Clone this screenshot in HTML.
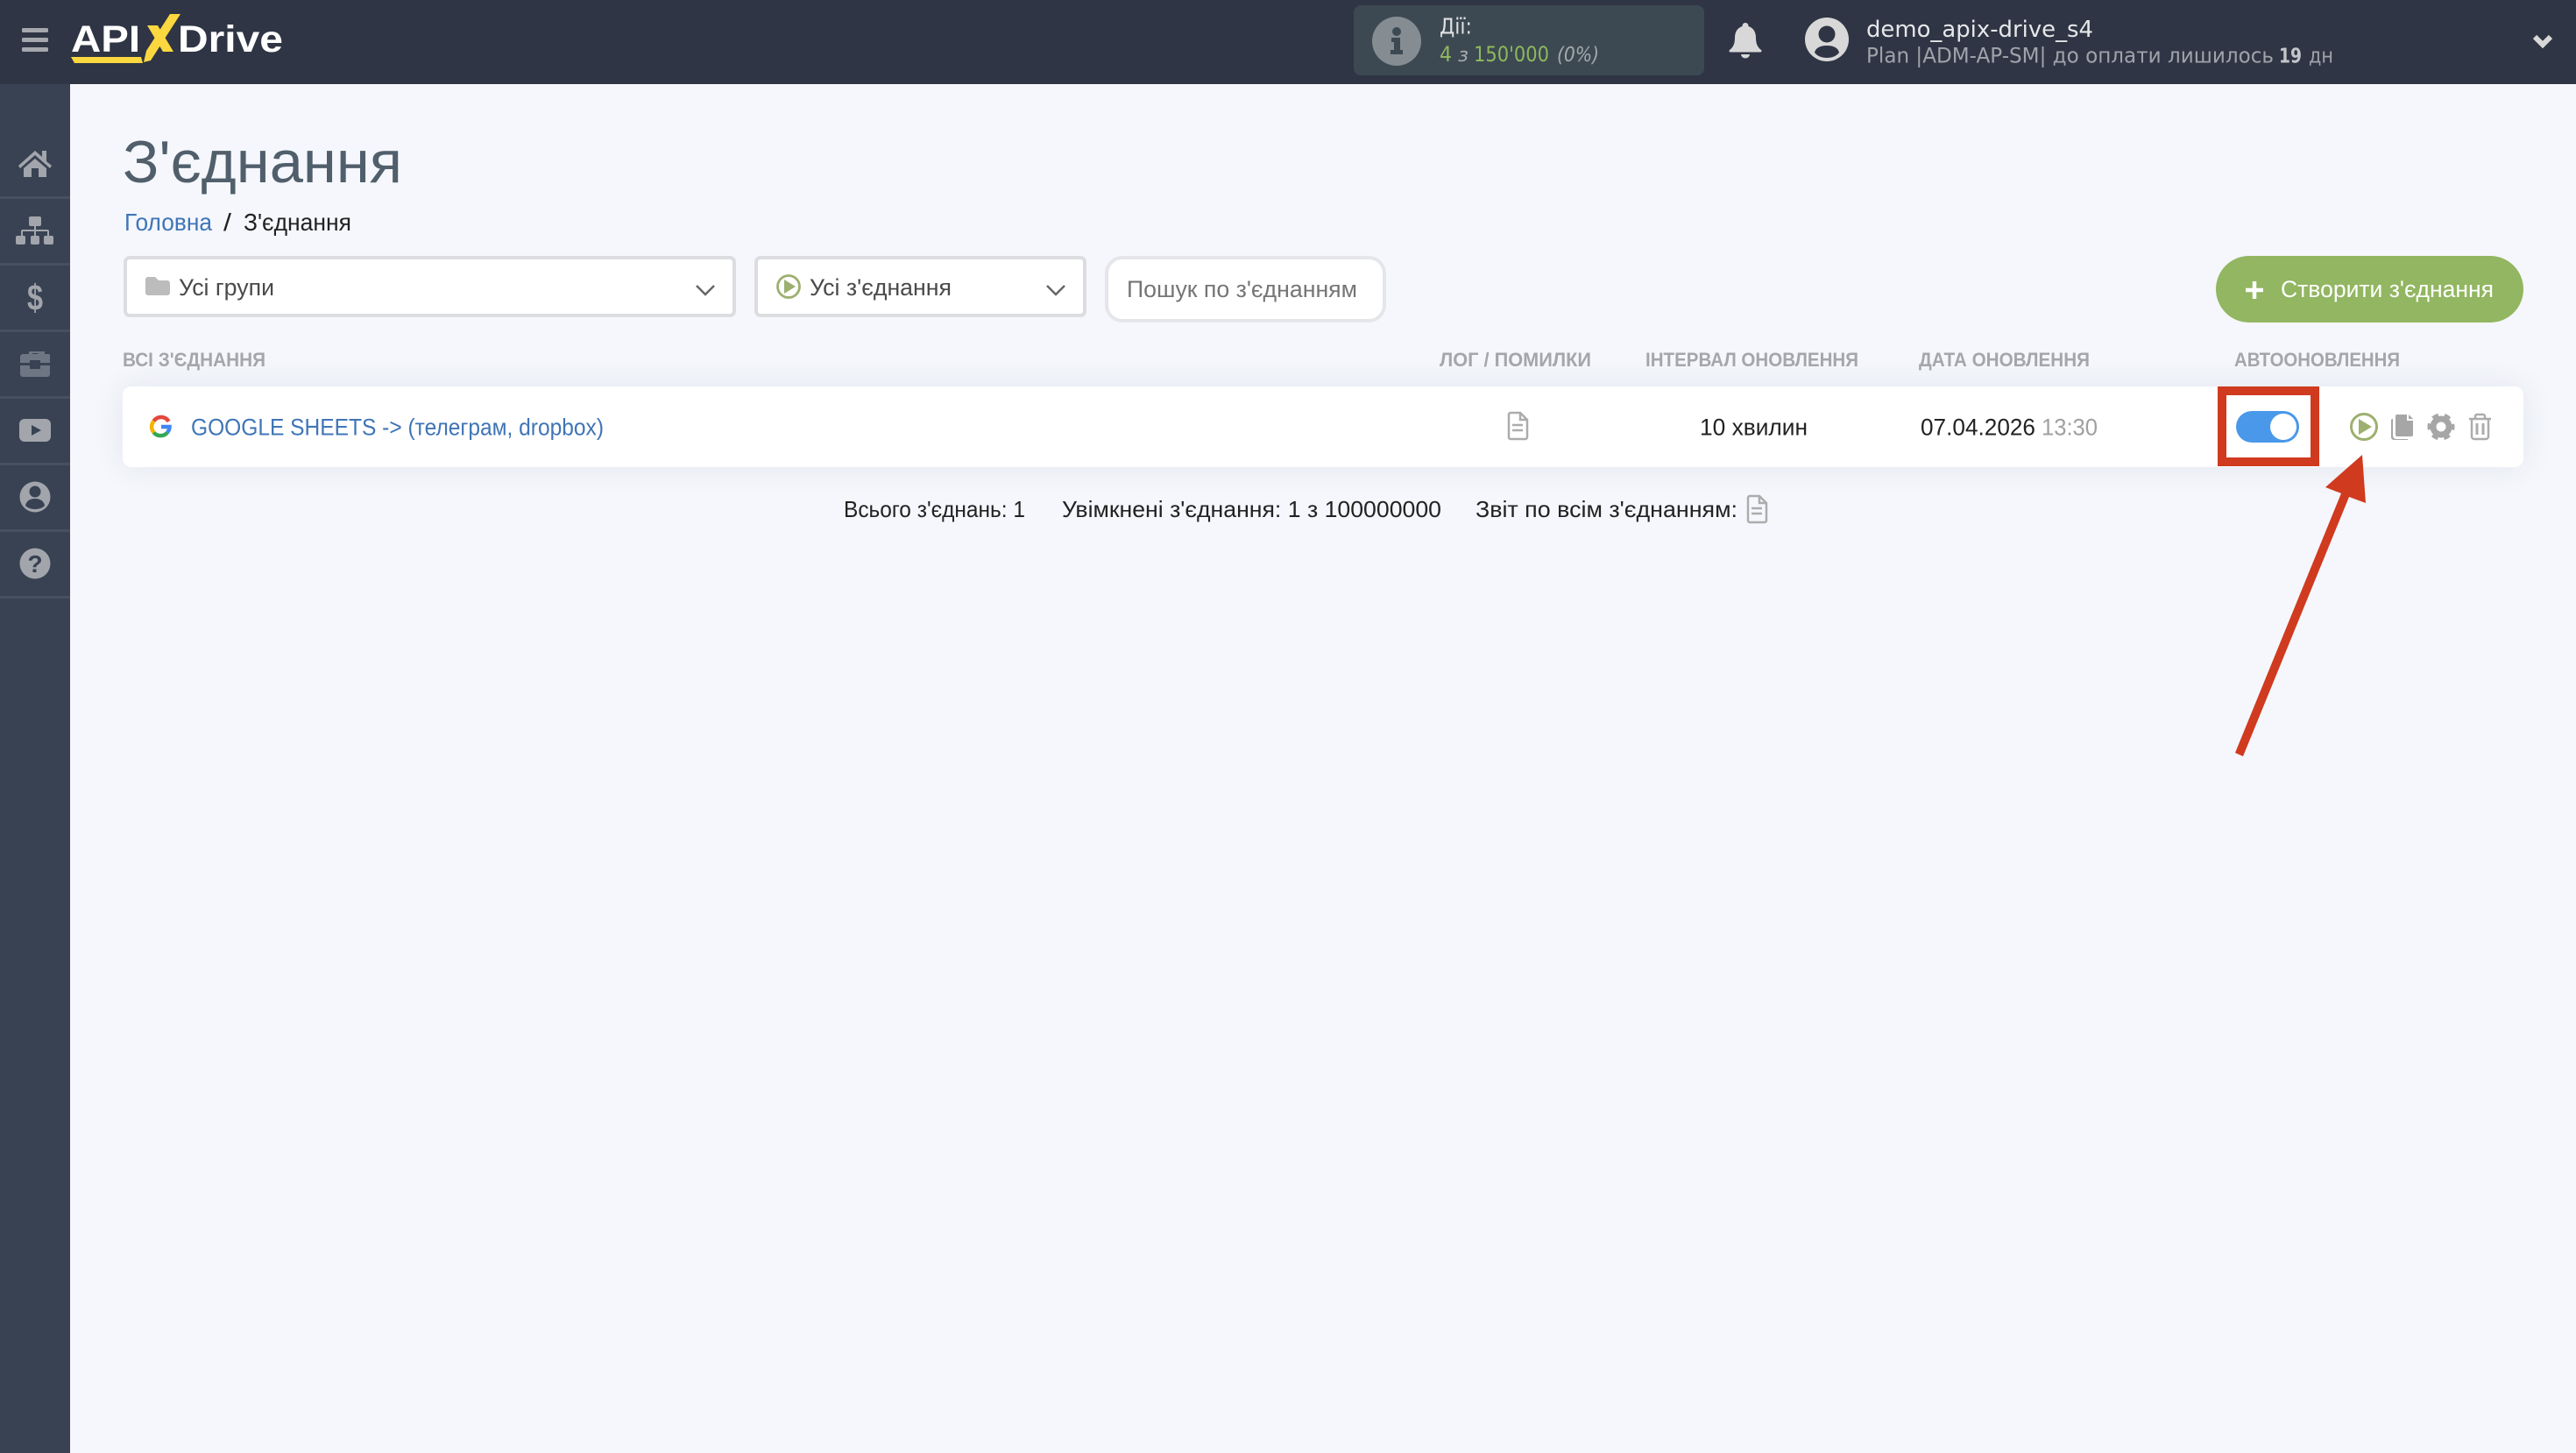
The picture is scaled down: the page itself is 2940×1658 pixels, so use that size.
<!DOCTYPE html>
<html lang="uk">
<head>
<meta charset="utf-8">
<title>З'єднання</title>
<style>
html,body{margin:0;padding:0;width:2940px;height:1658px;overflow:hidden;background:#f5f7fc}
div{position:absolute;box-sizing:border-box}
svg{position:absolute;left:0;top:0}
text{font-family:"Liberation Sans","DejaVu Sans",sans-serif}
.t{font-family:"DejaVu Sans","Liberation Sans",sans-serif}
.h{font-size:22px;font-weight:bold;fill:#a5a6ab}
</style>
</head>
<body>
<div style="left:0;top:0;width:2940px;height:96px;background:#2f3544"></div>
<div style="left:0;top:96px;width:80px;height:1562px;background:#384253"></div>
<div style="left:0;top:224px;width:80px;height:3px;background:#47505f"></div>
<div style="left:0;top:300px;width:80px;height:3px;background:#47505f"></div>
<div style="left:0;top:376px;width:80px;height:3px;background:#47505f"></div>
<div style="left:0;top:452px;width:80px;height:3px;background:#47505f"></div>
<div style="left:0;top:528px;width:80px;height:3px;background:#47505f"></div>
<div style="left:0;top:604px;width:80px;height:3px;background:#47505f"></div>
<div style="left:0;top:680px;width:80px;height:3px;background:#47505f"></div>
<div style="left:1545px;top:6px;width:400px;height:80px;background:#3c4952;border-radius:8px"></div>
<div style="left:141px;top:292px;width:699px;height:70px;background:#fff;border:4px solid #dcdde0;border-radius:7px"></div>
<div style="left:861px;top:292px;width:379px;height:70px;background:#fff;border:4px solid #dcdde0;border-radius:7px"></div>
<div style="left:1261px;top:292px;width:321px;height:76px;background:#fff;border:4px solid #e5e6ea;border-radius:20px"></div>
<div style="left:2529px;top:292px;width:351px;height:76px;background:#92b661;border-radius:38px"></div>
<div style="left:140px;top:441px;width:2740px;height:92px;background:#fff;border-radius:10px;box-shadow:0 0 36px rgba(45,55,85,.09)"></div>
<div style="left:2531px;top:441px;width:116px;height:91px;border:10px solid #d03a1f"></div>
<div style="left:2552px;top:469px;width:72px;height:36px;background:#4a98ea;border-radius:18px"></div>
<div style="left:2591px;top:472px;width:30px;height:30px;background:#fff;border-radius:50%"></div>

<svg width="2940" height="1658" viewBox="0 0 2940 1658" xmlns="http://www.w3.org/2000/svg">
<!-- hamburger -->
<g fill="#a5a8ae"><rect x="25" y="32" width="30" height="5" rx="1.5"/><rect x="25" y="43" width="30" height="5" rx="1.5"/><rect x="25" y="54" width="30" height="5" rx="1.5"/></g>
<!-- logo -->
<text x="81" y="59" font-size="43" font-weight="bold" fill="#fff" textLength="79" lengthAdjust="spacingAndGlyphs">API</text>
<text x="203" y="59" font-size="43" font-weight="bold" fill="#fff" textLength="120" lengthAdjust="spacingAndGlyphs">Drive</text>
<polygon points="81,65 161,65 163,72 85,72" fill="#fbd83f"/>
<polygon points="194,16 206,16 172,69 164,71 167,58" fill="#fbd83f"/>
<polygon points="168,29 180,29 198,59 186,59" fill="#fbd83f"/>

<!-- sidebar icons -->
<g fill="#a2a5ab">
<path d="M21 189 L40 172 L48 179 V172 H53 V184 L59 189 L57 192 L40 177 L23 192 Z"/>
<path d="M27 192 L40 181 L53 192 V202 H44 V192 H36 V202 H27 Z"/>
<rect x="33" y="247" width="14" height="11" rx="2"/><rect x="18" y="269" width="11" height="10" rx="2"/><rect x="35" y="269" width="10" height="10" rx="2"/><rect x="50" y="269" width="11" height="10" rx="2"/>
<path d="M39 258h2v4h13a2 2 0 0 1 2 2v5h-2v-5H41v5h-2v-5H26v5h-2v-5a2 2 0 0 1 2-2h13z"/>
<text x="31" y="354" font-size="42" font-weight="bold" textLength="18" lengthAdjust="spacingAndGlyphs">$</text>
<rect x="22" y="478" width="36" height="26" rx="6"/>
<circle cx="40" cy="567" r="17.5"/>
<circle cx="40" cy="643" r="17.5"/>
</g>
<path d="M23 407a3 3 0 0 1 3-3h7v-3h18v3h5a2 2 0 0 1 1 1v9H46v-3H34v3H23z M23 417h11v4h12v-4h11v10a3 3 0 0 1-3 3H26a3 3 0 0 1-3-3z M37 404h6.500v-1H37z" fill="#6f7683"/>
<polygon points="36,485 36,497 47,491" fill="#384253"/>
<circle cx="40" cy="561" r="6.500" fill="#384253"/>
<path d="M29 577c1-6 6-8 11-8s10 2 11 8c-3 3-7 4-11 4s-8-1-11-4z" fill="#384253"/>
<text x="40" y="653" font-size="28" font-weight="bold" fill="#384253" text-anchor="middle">?</text>

<!-- widget -->
<circle cx="1594" cy="47" r="28" fill="#858d92"/>
<circle cx="1594" cy="36" r="5" fill="#3c4952"/>
<path d="M1588 43h10v14h3v5h-14v-5h4v-9h-3z" fill="#3c4952"/>
<text class="t" x="1643" y="38.500" font-size="25" fill="#dfe1e3" textLength="37" lengthAdjust="spacingAndGlyphs">Дії:</text>
<text class="t" x="1643" y="70" font-size="24" fill="#8fb75d" textLength="14" lengthAdjust="spacingAndGlyphs">4</text>
<text class="t" x="1664" y="70" font-size="22" font-style="italic" fill="#a5a9ac" textLength="12" lengthAdjust="spacingAndGlyphs">з</text>
<text class="t" x="1682" y="70" font-size="24" fill="#8fb75d" textLength="86" lengthAdjust="spacingAndGlyphs">150'000</text>
<text class="t" x="1777" y="70" font-size="23" font-style="italic" fill="#a5a9ac" textLength="48" lengthAdjust="spacingAndGlyphs">(0%)</text>

<!-- bell, user -->
<path d="M1992 26a3.500 3.500 0 0 1 3.500 4c6 2 8.500 7 8.500 13 0 7 2 11 6 14 1 1 .5 2.500-1 2.500h-34c-1.500 0-2-1.500-1-2.500 4-3 6-7 6-14 0-6 2.500-11 8.500-13a3.500 3.500 0 0 1 3.500-4z" fill="#d8d8d8"/>
<path d="M1987 62h10a5 4.500 0 0 1-10 0z" fill="#d8d8d8"/>
<circle cx="2085" cy="45" r="25" fill="#d8d8d8"/>
<circle cx="2085" cy="39" r="9.500" fill="#2f3544"/>
<path d="M2071 60c1-5 6-8 14-8s13 3 14 8c-3 4-8 6-14 6s-11-2-14-6z" fill="#2f3544"/>
<text class="t" x="2130" y="42" font-size="26" fill="#e6e7e9" textLength="259" lengthAdjust="spacingAndGlyphs">demo_apix-drive_s4</text>
<text class="t" x="2130" y="71.500" font-size="24" fill="#9fa3aa" textLength="465" lengthAdjust="spacingAndGlyphs">Plan |ADM-AP-SM| до оплати лишилось</text>
<text class="t" x="2601" y="71.500" font-size="23" font-weight="bold" fill="#c3c6ca" textLength="26" lengthAdjust="spacingAndGlyphs">19</text>
<text class="t" x="2635" y="71.500" font-size="24" fill="#9fa3aa" textLength="28" lengthAdjust="spacingAndGlyphs">дн</text>
<path d="M2893 42 L2902 51 L2911 42" fill="none" stroke="#d8d8d8" stroke-width="6"/>

<!-- title -->
<text x="140" y="208" font-size="68" fill="#505f6b" textLength="319" lengthAdjust="spacingAndGlyphs">З'єднання</text>
<text x="142" y="263" font-size="28" fill="#3f75b6" textLength="100" lengthAdjust="spacingAndGlyphs">Головна</text>
<text x="255" y="263" font-size="28" fill="#222" textLength="9" lengthAdjust="spacingAndGlyphs">/</text>
<text x="278" y="263" font-size="28" fill="#222" textLength="123" lengthAdjust="spacingAndGlyphs">З'єднання</text>

<!-- select 1 -->
<path d="M166 319a3 3 0 0 1 3-3h8l4 4h10a3 3 0 0 1 3 3v11a3 3 0 0 1-3 3H169a3 3 0 0 1-3-3z" fill="#bcbcbc"/>
<text x="204" y="337" font-size="27" fill="#4a4a4a" textLength="109" lengthAdjust="spacingAndGlyphs">Усі групи</text>
<path d="M795 326 L805 336 L815 326" fill="none" stroke="#666" stroke-width="2.500"/>
<!-- select 2 -->
<circle cx="900" cy="327" r="12.500" fill="none" stroke="#9db06f" stroke-width="2.800"/>
<polygon points="895,319 895,335 908,327" fill="#9db06f"/>
<text x="924" y="337" font-size="27" fill="#4a4a4a" textLength="162" lengthAdjust="spacingAndGlyphs">Усі з'єднання</text>
<path d="M1195 326 L1205 336 L1215 326" fill="none" stroke="#666" stroke-width="2.500"/>
<!-- search -->
<text x="1286" y="339" font-size="27" fill="#757575" textLength="263" lengthAdjust="spacingAndGlyphs">Пошук по з'єднанням</text>
<!-- button -->
<path d="M2573 321v20M2563 331h20" stroke="#fff" stroke-width="4.500" fill="none"/>
<text x="2603" y="339" font-size="27" fill="#fff" textLength="243" lengthAdjust="spacingAndGlyphs">Створити з'єднання</text>

<!-- table header -->
<text class="h" x="140" y="418" textLength="163" lengthAdjust="spacingAndGlyphs">ВСІ З'ЄДНАННЯ</text>
<text class="h" x="1643" y="418" textLength="173" lengthAdjust="spacingAndGlyphs">ЛОГ / ПОМИЛКИ</text>
<text class="h" x="1878" y="418" textLength="243" lengthAdjust="spacingAndGlyphs">ІНТЕРВАЛ ОНОВЛЕННЯ</text>
<text class="h" x="2190" y="418" textLength="195" lengthAdjust="spacingAndGlyphs">ДАТА ОНОВЛЕННЯ</text>
<text class="h" x="2550" y="418" textLength="189" lengthAdjust="spacingAndGlyphs">АВТООНОВЛЕННЯ</text>

<!-- row -->
<g fill="none" stroke-width="4.500">
<path d="M192.500 481 A10 10 0 0 0 175.500 480.500" stroke="#e4483b"/>
<path d="M175.500 480.500 A10 10 0 0 0 175.500 493.500" stroke="#f4b400"/>
<path d="M175.500 493.500 A10 10 0 0 0 191 493.500" stroke="#34a853"/>
<path d="M191 493.500 A10 10 0 0 0 193.500 487 H184" stroke="#4285f4"/>
</g>
<text x="218" y="496.500" font-size="27" fill="#3f75b6" textLength="471" lengthAdjust="spacingAndGlyphs">GOOGLE SHEETS -&gt; (телеграм, dropbox)</text>
<g fill="none" stroke="#acacac" stroke-width="2.500">
<path d="M1724 471h11l8 8v20a2 2 0 0 1-2 2h-17a2 2 0 0 1-2-2v-26a2 2 0 0 1 2-2z"/>
<path d="M1735 471v8h8"/>
<path d="M1726 485h12M1726 491h12"/>
</g>
<text x="1940" y="496.500" font-size="27" fill="#222" textLength="123" lengthAdjust="spacingAndGlyphs">10 хвилин</text>
<text x="2192" y="496.500" font-size="27" fill="#222" textLength="131" lengthAdjust="spacingAndGlyphs">07.04.2026</text>
<text x="2330" y="496.500" font-size="27" fill="#a0a0a0" textLength="64" lengthAdjust="spacingAndGlyphs">13:30</text>

<!-- actions -->
<circle cx="2698" cy="487" r="14.500" fill="none" stroke="#9db06f" stroke-width="3"/>
<polygon points="2692,478 2692,496 2707,487" fill="#9db06f"/>
<path d="M2736 473h11v7h7v16a2 2 0 0 1-2 2h-16a2 2 0 0 1-2-2v-21a2 2 0 0 1 2-2z M2749 473l5 5h-5z" fill="#a6a6a6"/>
<path d="M2731 478v19a4 4 0 0 0 4 4h13v1h-16a3 3 0 0 1-3-3v-20a2 2 0 0 1 2-1z" fill="#a6a6a6"/>
<circle cx="2786" cy="487" r="9" fill="none" stroke="#a6a6a6" stroke-width="7"/>
<circle cx="2786" cy="487" r="13" fill="none" stroke="#a6a6a6" stroke-width="5" stroke-dasharray="6.800 6.800" stroke-dashoffset="3.400"/>
<g fill="none" stroke="#acacac" stroke-width="2.500">
<path d="M2818 478h25M2825 478v-3a2 2 0 0 1 2-2h7a2 2 0 0 1 2 2v3"/>
<path d="M2821 478v20a3 3 0 0 0 3 3h13a3 3 0 0 0 3-3v-20"/>
<path d="M2827 483v13M2834 483v13" stroke-width="3"/>
</g>

<!-- footer -->
<text x="963" y="590" font-size="26" fill="#222" textLength="207" lengthAdjust="spacingAndGlyphs">Всього з'єднань: 1</text>
<text x="1212" y="590" font-size="26" fill="#222" textLength="433" lengthAdjust="spacingAndGlyphs">Увімкнені з'єднання: 1 з 100000000</text>
<text x="1684" y="590" font-size="26" fill="#222" textLength="299" lengthAdjust="spacingAndGlyphs">Звіт по всім з'єднанням:</text>
<g fill="none" stroke="#acacac" stroke-width="2.500">
<path d="M1997 566h11l8 8v20a2 2 0 0 1-2 2h-17a2 2 0 0 1-2-2v-26a2 2 0 0 1 2-2z"/>
<path d="M2008 566v8h8"/>
<path d="M1999 580h12M1999 586h12"/>
</g>

<!-- arrow -->
<polygon points="2696,519 2654,556 2672,563 2551,859 2560,863 2681,567 2700,574" fill="#d03a1f"/>
</svg>
</body>
</html>
